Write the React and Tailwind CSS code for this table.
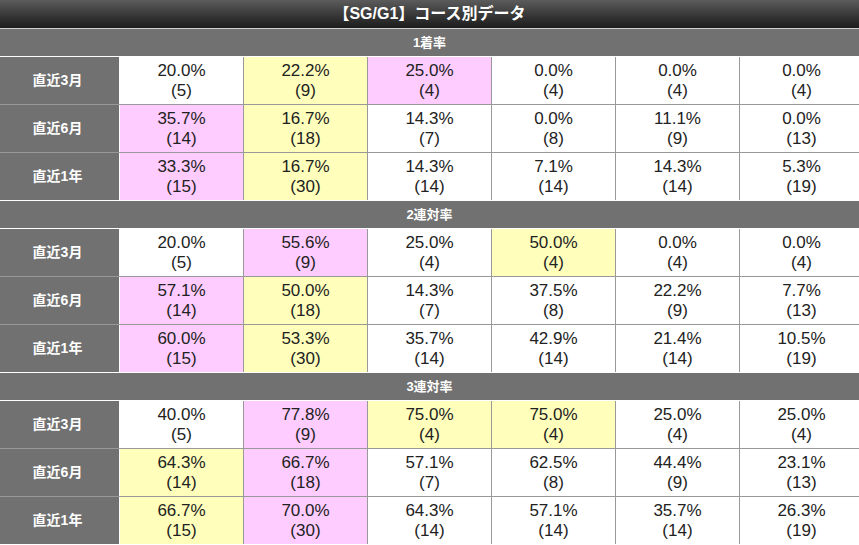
import React from "react";

const P = "bg-[#ffccff]";
const Y = "bg-[#ffffbb]";

const sections = [
  {
    title: "1着率",
    rows: [
      { label: "直近3月", cells: [["20.0%", 5], ["22.2%", 9, Y], ["25.0%", 4, P], ["0.0%", 4], ["0.0%", 4], ["0.0%", 4]] },
      { label: "直近6月", cells: [["35.7%", 14, P], ["16.7%", 18, Y], ["14.3%", 7], ["0.0%", 8], ["11.1%", 9], ["0.0%", 13]] },
      { label: "直近1年", cells: [["33.3%", 15, P], ["16.7%", 30, Y], ["14.3%", 14], ["7.1%", 14], ["14.3%", 14], ["5.3%", 19]] },
    ],
  },
  {
    title: "2連対率",
    rows: [
      { label: "直近3月", cells: [["20.0%", 5], ["55.6%", 9, P], ["25.0%", 4], ["50.0%", 4, Y], ["0.0%", 4], ["0.0%", 4]] },
      { label: "直近6月", cells: [["57.1%", 14, P], ["50.0%", 18, Y], ["14.3%", 7], ["37.5%", 8], ["22.2%", 9], ["7.7%", 13]] },
      { label: "直近1年", cells: [["60.0%", 15, P], ["53.3%", 30, Y], ["35.7%", 14], ["42.9%", 14], ["21.4%", 14], ["10.5%", 19]] },
    ],
  },
  {
    title: "3連対率",
    rows: [
      { label: "直近3月", cells: [["40.0%", 5], ["77.8%", 9, P], ["75.0%", 4, Y], ["75.0%", 4, Y], ["25.0%", 4], ["25.0%", 4]] },
      { label: "直近6月", cells: [["64.3%", 14, Y], ["66.7%", 18, P], ["57.1%", 7], ["62.5%", 8], ["44.4%", 9], ["23.1%", 13]] },
      { label: "直近1年", cells: [["66.7%", 15, Y], ["70.0%", 30, P], ["64.3%", 14], ["57.1%", 14], ["35.7%", 14], ["26.3%", 19]] },
    ],
  },
];

const DataRow = ({ label, cells, last }) => (
  <div className={`flex h-[48px] ${last ? "border-b border-white" : "border-b border-[#999]"}`}>
    <div className="w-[120px] shrink-0 bg-[#717171] border-r border-white flex items-center justify-center pr-[4px] text-white font-bold text-[14px]">
      {label}
    </div>
    {cells.map(([pct, n, bg], i) => (
      <div
        key={i}
        className={`w-[124px] shrink-0 border-r border-[#999] ${bg ?? "bg-white"} flex flex-col items-center justify-center text-[17px] leading-[20px] text-[#222]`}
      >
        <span>{pct}</span>
        <span>({n})</span>
      </div>
    ))}
  </div>
);

export default function App() {
  return (
    <div
      className="w-[859px] h-[545px] overflow-hidden bg-white"
      style={{ fontFamily: '"Liberation Sans", "Noto Sans CJK JP", sans-serif' }}
    >
      <div className="h-[29px] bg-gradient-to-b from-[#5c5c5c] to-[#1c1c1c] border-b border-[#cfcfcf] flex items-center justify-center text-white font-bold text-[16px]">
        【SG/G1】コース別データ
      </div>
      {sections.map((s) => (
        <div key={s.title}>
          <div className="h-[28px] bg-[#717171] border-b border-white flex items-center justify-center text-white font-bold text-[13px]">
            {s.title}
          </div>
          {s.rows.map((r, i) => (
            <DataRow key={r.label} {...r} last={i === 2} />
          ))}
        </div>
      ))}
    </div>
  );
}
